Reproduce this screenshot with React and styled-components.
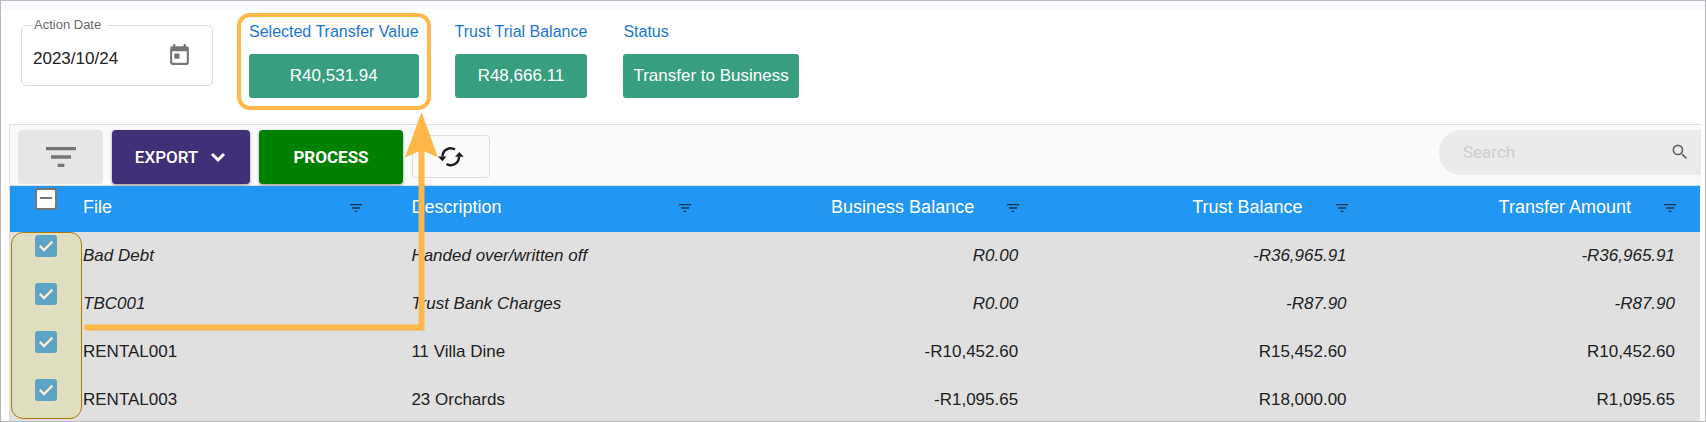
import React from "react";
import styled, { createGlobalStyle } from "styled-components";
import { MdToday, MdFilterList, MdSearch } from "react-icons/md";

const Global = createGlobalStyle`
  *, *::before, *::after { box-sizing: border-box; }
  body { margin: 0; background: #fff; font-family: "Liberation Sans", Arial, sans-serif; color: #212121; }
  button, input { font: inherit; color: inherit; }
`;

const Frame = styled.div`
  position: relative;
  height: 100vh;
  overflow: hidden;
  border: 1px solid #b9b9b9;
  background: #f8f9fd;
  padding: 8px 0 0 1px;
`;

const Page = styled.main`
  min-height: 100%;
  background: #fff;
  border-top-left-radius: 6px;
  padding: 4px 4px 0 7px;
`;

const Summary = styled.section`
  display: flex;
  align-items: flex-start;
  gap: 36px;
  height: 111px;
  padding: 5px 0 0 12px;
`;

const DateField = styled.fieldset`
  display: flex;
  align-items: flex-start;
  justify-content: space-between;
  width: 192px;
  height: 68px;
  margin: 0;
  padding: 11px 20px 0 11px;
  border: 1px solid #dcdcdc;
  border-radius: 5px;
`;

const Legend = styled.legend`
  padding: 0 6px 0 1px;
  font-size: 13px;
  line-height: 14px;
  color: #6b6b6b;
`;

const DateInput = styled.input`
  width: 100px;
  height: 32px;
  padding: 0;
  border: 0;
  outline: 0;
  background: none;
  font-size: 17px;
`;

const IconButton = styled.button`
  display: flex;
  padding: 0;
  border: 0;
  background: none;
  color: #757575;
`;

const Metric = styled.div`
  position: relative;
  display: flex;
  flex-direction: column;
  gap: 8px;
`;

const MetricLabel = styled.span`
  font-size: 16px;
  line-height: 28px;
  color: #1976d2;
`;

const MetricValue = styled.output`
  padding: 0 10px;
  border-radius: 3px;
  background: #389e80;
  color: #fff;
  font-size: 17px;
  line-height: 44px;
  text-align: center;
`;

const Highlight = styled.span`
  position: absolute;
  inset: -5px -12px -12px -12px;
  border: 4px solid #ffb74a;
  border-radius: 13px;
`;

const Grid = styled.section`
  border: 1px solid #dedede;
  border-width: 1px 0 0 1px;
`;

const Toolbar = styled.div`
  display: flex;
  align-items: flex-start;
  height: 61px;
  padding: 5px 0 0 8px;
  background: #fafafa;
  border-bottom: 1px solid #dedede;
`;

const ToolButton = styled.button`
  display: flex;
  align-items: center;
  justify-content: center;
  gap: 11px;
  width: ${(p) => p.$width}px;
  height: 54px;
  margin-right: 9px;
  padding: 0;
  border: 0;
  border-radius: 4px;
  background: ${(p) => p.$bg};
  color: ${(p) => p.$color || "#fff"};
  font-family: Roboto, sans-serif;
  font-size: 17px;
  line-height: 20px;
  font-weight: ${(p) => p.$weight || 500};
  box-shadow: ${(p) => (p.$flat ? "none" : "0 1px 3px rgba(0, 0, 0, 0.4)")};
`;

const RefreshButton = styled.button`
  display: flex;
  align-items: center;
  justify-content: center;
  width: 78px;
  height: 43px;
  margin-top: 5px;
  padding: 0;
  border: 1px solid #dcdcdc;
  border-radius: 4px;
  background: #fafafa;
`;

const Search = styled.label`
  display: flex;
  align-items: center;
  width: 262px;
  height: 45px;
  margin-left: auto;
  padding: 0 11px 2px 24px;
  border-radius: 22px 0 0 22px;
  background: #ebebeb;
  color: #666;
`;

const SearchInput = styled.input`
  flex: 1;
  min-width: 0;
  padding: 0;
  border: 0;
  outline: 0;
  background: none;
  font-family: Roboto, sans-serif;
  font-size: 17px;
  &::placeholder { color: #cdcdcd; opacity: 1; }
`;

const Table = styled.table`
  width: calc(100% - 1px);
  table-layout: fixed;
  border-collapse: collapse;
`;

const HeadRow = styled.tr`
  height: 46px;
  background: #2196f3;
  color: #fff;
`;

const SelectHead = styled.th`
  width: 48px;
  padding: 2px 0 0 25px;
  vertical-align: top;
`;

const Head = styled.th`
  padding: 0 22px 4px 25px;
  font-size: 18px;
  font-weight: 400;
`;

const HeadContent = styled.div`
  display: flex;
  align-items: center;
  justify-content: ${(p) => (p.$numeric ? "flex-end" : "space-between")};
  gap: 31px;
  button { color: #1f3447; padding-top: 2px; }
`;

const Row = styled.tr`
  height: 48px;
  background: #e0e0e0;
  font-style: ${(p) => (p.$system ? "italic" : "normal")};
`;

const SelectCell = styled.td`
  padding: 3px 0 0 25px;
  vertical-align: top;
`;

const Cell = styled.td`
  padding: 0 25px;
  font-size: 17px;
  text-align: ${(p) => (p.$numeric ? "right" : "left")};
`;

const Check = styled.label`
  position: relative;
  z-index: 2;
  display: grid;
  width: 22px;
  > * { grid-area: 1 / 1; }
  svg { pointer-events: none; }
`;

const CheckInput = styled.input`
  appearance: none;
  width: 22px;
  height: 22px;
  margin: 0;
  border-radius: 3px;
  border: ${(p) => (p.$partial ? "2px solid #757575" : "0")};
  background: ${(p) => (p.$partial ? "#fff" : "#5ca3c6")};
`;

const Body = styled.div`
  position: relative;
`;

const SelectionMark = styled.div`
  position: absolute;
  z-index: 1;
  top: 46px;
  left: 1px;
  width: 71px;
  height: 187px;
  border: 1px solid #b0780c;
  border-radius: 12px;
  background: #dfdebe;
`;

const Arrow = styled.svg`
  position: absolute;
  z-index: 3;
  top: 111px;
  left: 83px;
  pointer-events: none;
`;

const columns = [
  { key: "file", label: "File" },
  { key: "description", label: "Description" },
  { key: "business", label: "Business Balance", numeric: true },
  { key: "trust", label: "Trust Balance", numeric: true },
  { key: "transfer", label: "Transfer Amount", numeric: true },
];

const rows = [
  { file: "Bad Debt", description: "Handed over/written off", business: "R0.00", trust: "-R36,965.91", transfer: "-R36,965.91", system: true },
  { file: "TBC001", description: "Trust Bank Charges", business: "R0.00", trust: "-R87.90", transfer: "-R87.90", system: true },
  { file: "RENTAL001", description: "11 Villa Dine", business: "-R10,452.60", trust: "R15,452.60", transfer: "R10,452.60" },
  { file: "RENTAL003", description: "23 Orchards", business: "-R1,095.65", trust: "R18,000.00", transfer: "R1,095.65" },
];

function Checkbox({ label, partial }) {
  return (
    <Check>
      <CheckInput type="checkbox" aria-label={label} defaultChecked={!partial} $partial={partial} />
      <svg width="22" height="22" viewBox="0 0 22 22" fill="none">
        {partial ? (
          <path d="M5 10h12" stroke="#757575" strokeWidth="2" />
        ) : (
          <path d="M4.800 10.800l4.200 4.200L17.400 6.600" stroke="#fdeccb" strokeWidth="2.400" />
        )}
      </svg>
    </Check>
  );
}

function RefreshIcon() {
  return (
    <svg width="26" height="20" viewBox="0 0 26 20" fill="none">
      <path d="M4.500 9.500A8.200 8.200 0 0 1 17 2.600M21 9.500A8.200 8.200 0 0 1 8.500 16.900" stroke="#1c1c1c" strokeWidth="2.400" />
      <path d="M0 9.500h8.500L4.300 14.200ZM17 9.800h8.700L21.300 5Z" fill="#1c1c1c" />
    </svg>
  );
}

export default function App() {
  return (
    <Frame>
      <Global />
      <Page>
        <Summary>
          <DateField>
            <Legend>Action Date</Legend>
            <DateInput aria-label="Action Date" defaultValue="2023/10/24" />
            <IconButton aria-label="Choose date"><MdToday size={25} /></IconButton>
          </DateField>
          <Metric>
            <MetricLabel>Selected Transfer Value</MetricLabel>
            <MetricValue>R40,531.94</MetricValue>
            <Highlight />
          </Metric>
          <Metric>
            <MetricLabel>Trust Trial Balance</MetricLabel>
            <MetricValue>R48,666.11</MetricValue>
          </Metric>
          <Metric>
            <MetricLabel>Status</MetricLabel>
            <MetricValue>Transfer to Business</MetricValue>
          </Metric>
        </Summary>
        <Grid>
          <Toolbar>
            <ToolButton $width={85} $bg="#e6e6e6" $color="#757575" $flat aria-label="Filter">
              <MdFilterList size={40} />
            </ToolButton>
            <ToolButton $width={138} $bg="#3f3077">
              EXPORT
              <svg width="18" height="18" viewBox="0 0 18 18" fill="none">
                <path d="M3 6l6 6 6-6" stroke="#fff" strokeWidth="3" />
              </svg>
            </ToolButton>
            <ToolButton $width={144} $bg="#008000" $weight={700}>PROCESS</ToolButton>
            <RefreshButton aria-label="Refresh"><RefreshIcon /></RefreshButton>
            <Search>
              <SearchInput type="search" placeholder="Search" aria-label="Search" />
              <MdSearch size={20} />
            </Search>
          </Toolbar>
          <Body>
            <SelectionMark />
            <Table>
              <thead>
                <HeadRow>
                  <SelectHead><Checkbox label="Select all" partial /></SelectHead>
                  {columns.map((c) => (
                    <Head key={c.key}>
                      <HeadContent $numeric={c.numeric}>
                        {c.label}
                        <IconButton aria-label={`Filter ${c.label}`}><MdFilterList size={16} /></IconButton>
                      </HeadContent>
                    </Head>
                  ))}
                </HeadRow>
              </thead>
              <tbody>
                {rows.map((r) => (
                  <Row key={r.file} $system={r.system}>
                    <SelectCell><Checkbox label={`Select ${r.file}`} /></SelectCell>
                    {columns.map((c) => (
                      <Cell key={c.key} $numeric={c.numeric}>{r[c.key]}</Cell>
                    ))}
                  </Row>
                ))}
              </tbody>
            </Table>
          </Body>
        </Grid>
      </Page>
      <Arrow width="360" height="222" viewBox="0 0 360 222">
        <path d="M3 215.500H337.500V34" fill="none" stroke="#ffb74a" strokeWidth="6" strokeLinecap="round" />
        <path d="M337.500 0L354 45.500L337.500 38L321 45.500Z" fill="#ffb74a" />
      </Arrow>
    </Frame>
  );
}
